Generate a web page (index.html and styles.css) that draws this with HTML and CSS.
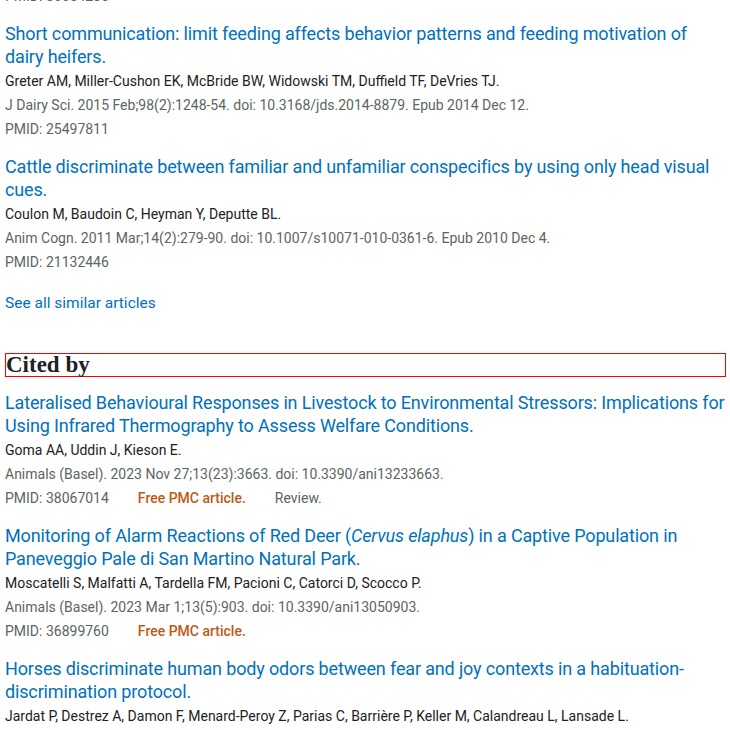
FILE: index.html
```html
<!DOCTYPE html>
<html lang="en">
<head>
<meta charset="utf-8">
<title>Similar articles and cited by</title>
<link rel="stylesheet" href="styles.css">
</head>
<body>
<section class="similar">
  <div class="cut-pmid"><span class="pmid">PMID: 30054286</span></div>
  <ul class="list">
    <li class="docsum">
      <a class="title" href="#">Short communication: limit feeding affects behavior patterns and feeding motivation of dairy heifers.</a>
      <div class="authors">Greter AM, Miller-Cushon EK, McBride BW, Widowski TM, Duffield TF, DeVries TJ.</div>
      <div class="journal">J Dairy Sci. 2015 Feb;98(2):1248-54. doi: 10.3168/jds.2014-8879. Epub 2014 Dec 12.</div>
      <div class="meta"><span class="pmid">PMID: 25497811</span></div>
    </li>
    <li class="docsum">
      <a class="title" href="#">Cattle discriminate between familiar and unfamiliar conspecifics by using only head visual cues.</a>
      <div class="authors">Coulon M, Baudoin C, Heyman Y, Deputte BL.</div>
      <div class="journal">Anim Cogn. 2011 Mar;14(2):279-90. doi: 10.1007/s10071-010-0361-6. Epub 2010 Dec 4.</div>
      <div class="meta"><span class="pmid">PMID: 21132446</span></div>
    </li>
  </ul>
  <a class="see-all" href="#">See all similar articles</a>
</section>

<section class="cited">
  <h2 class="heading">Cited by</h2>
  <ul class="list">
    <li class="docsum">
      <a class="title" href="#">Lateralised Behavioural Responses in Livestock to Environmental Stressors: Implications for Using Infrared Thermography to Assess Welfare Conditions.</a>
      <div class="authors">Goma AA, Uddin J, Kieson E.</div>
      <div class="journal">Animals (Basel). 2023 Nov 27;13(23):3663. doi: 10.3390/ani13233663.</div>
      <div class="meta"><span class="pmid">PMID: 38067014</span><span class="free">Free PMC article.</span><span class="type">Review.</span></div>
    </li>
    <li class="docsum">
      <a class="title" href="#">Monitoring of Alarm Reactions of Red Deer (<i>Cervus elaphus</i>) in a Captive Population in Paneveggio Pale di San Martino Natural Park.</a>
      <div class="authors">Moscatelli S, Malfatti A, Tardella FM, Pacioni C, Catorci D, Scocco P.</div>
      <div class="journal">Animals (Basel). 2023 Mar 1;13(5):903. doi: 10.3390/ani13050903.</div>
      <div class="meta"><span class="pmid">PMID: 36899760</span><span class="free">Free PMC article.</span></div>
    </li>
    <li class="docsum">
      <a class="title" href="#">Horses discriminate human body odors between fear and joy contexts in a habituation-discrimination protocol.</a>
      <div class="authors">Jardat P, Destrez A, Damon F, Menard-Peroy Z, Parias C, Barrière P, Keller M, Calandreau L, Lansade L.</div>
    </li>
  </ul>
</section>
</body>
</html>
```
FILE: styles.css
```css
html, body {
  margin: 0;
  padding: 0;
  background: #ffffff;
}
body {
  padding: 0 4px 0 5px;
  font-family: Roboto, "Liberation Sans", sans-serif;
  color: #212121;
  overflow: hidden;
}
a {
  text-decoration: none;
  color: #0071bc;
}
.cut-pmid {
  margin-top: -16px;
  font-size: 14px;
  line-height: 24px;
}
.list {
  list-style: none;
  margin: 0;
  padding: 0;
}
.docsum {
  padding-top: 14px;
}
.title {
  display: block;
  font-size: 18px;
  line-height: 23px;
  letter-spacing: -0.15px;
  color: #0071bc;
}
.title i {
  font-style: italic;
}
.authors {
  margin-top: 1px;
  font-size: 14px;
  line-height: 24px;
  color: #212121;
}
.journal,
.meta {
  font-size: 14px;
  line-height: 24px;
  color: #5b665e;
}
.pmid {
  color: #5b665e;
}
.free {
  margin-left: 29px;
  color: #bd5a14;
  font-weight: 500;
}
.type {
  margin-left: 29px;
  color: #5b665e;
}
.see-all {
  display: block;
  margin-top: 17px;
  font-size: 15.5px;
  line-height: 24px;
  width: max-content;
}
.cited {
  margin-top: 38px;
}
.heading {
  margin: 0;
  border: 1px solid #ff0000;
  font-family: "Liberation Serif", "DejaVu Serif", serif;
  font-weight: bold;
  font-size: 23px;
  line-height: 22px;
  color: #212121;
  padding-left: 0;
}
```
